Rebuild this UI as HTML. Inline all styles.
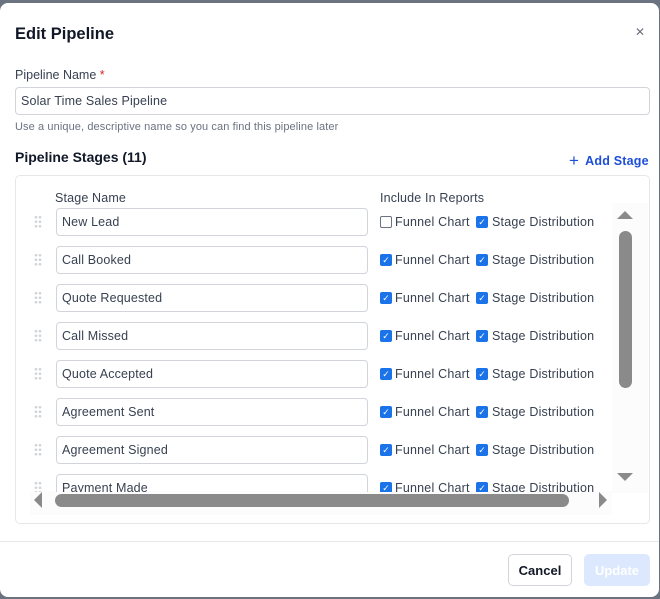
<!DOCTYPE html>
<html><head><style>
*{box-sizing:border-box;margin:0;padding:0}
body{width:660px;height:599px;background:#6b7280;font-family:"Liberation Sans",sans-serif;position:relative;overflow:hidden;color:#374151}
.m{position:absolute;left:0;top:3px;width:659px;height:594px;background:#fff;border-radius:8px}
.a{position:absolute}
.t{left:15px;top:22px;font-size:16.5px;font-weight:bold;color:#111827}
.x{left:635px;top:22px;font-size:12px;color:#6b7280}
.lbl{left:15px;top:65px;font-size:12.5px;color:#374151}
.inp{border:1px solid #d1d5db;border-radius:4px;font-size:12.5px;color:#374151;padding-left:5px;display:flex;align-items:center;letter-spacing:.15px}
.help{left:15px;top:118px;font-size:11px;color:#6b7280;letter-spacing:.1px}
.h2{left:15px;top:146px;font-size:14px;font-weight:bold;color:#111827}
.add{left:569px;top:147px;font-size:12.5px;font-weight:bold;color:#1d4ed8;letter-spacing:.2px}
.box{left:15px;top:172px;width:635px;height:349px;border:1px solid #e5e7eb;border-radius:5px}
.clip{left:16px;top:173px;width:596px;height:316px;overflow:hidden}
.row{position:absolute;left:0;width:596px;height:28px}
.dr{position:absolute;left:18px;top:7px;width:8px;height:14px;background:radial-gradient(circle,#d1d5db 1.2px,transparent 1.5px) 0 0/4px 4.5px}
.cb{position:absolute;width:12px;height:12px;border-radius:2px;background:#1a73e8;color:#fff;font-size:9px;line-height:12px;text-align:center}
.cb.off{background:#fff;border:1px solid #6b7280}
.ct{position:absolute;font-size:12.5px;color:#374151;top:7px;letter-spacing:.2px}
.btn{border-radius:5px;font-size:13px;font-weight:bold;display:flex;align-items:center;justify-content:center}
</style></head><body>
<div class="m">
<div class="a t">Edit Pipeline</div>
<div class="a x">✕</div>
<div class="a lbl">Pipeline Name <span style="color:#dc2626">*</span></div>
<div class="a inp" style="left:15px;top:84px;width:635px;height:28px">Solar Time Sales Pipeline</div>
<div class="a help">Use a unique, descriptive name so you can find this pipeline later</div>
<div class="a h2">Pipeline Stages (11)</div>
<div class="a add"><span style="font-size:17px;font-weight:normal;position:relative;top:1px;margin-right:6px">+</span>Add Stage</div>
<div class="a box"></div>
<div class="a" style="left:612px;top:200px;width:36px;height:290px;background:#fcfcfc"></div>
<div class="a" style="left:30px;top:488px;width:582px;height:24px;background:#fcfcfc"></div>
<div class="a clip">
<div class="a" style="left:39px;top:15px;font-size:12.5px;letter-spacing:.15px">Stage Name</div>
<div class="a" style="left:364px;top:15px;font-size:12.5px;letter-spacing:.15px">Include In Reports</div>
<div id="rows"></div>
</div>
<div class="a" style="left:617px;top:208px;width:0;height:0;border-left:8px solid transparent;border-right:8px solid transparent;border-bottom:8px solid #8a8a8a"></div>
<div class="a" style="left:619px;top:228px;width:13px;height:157px;border-radius:7px;background:#8a8a8a"></div>
<div class="a" style="left:617px;top:470px;width:0;height:0;border-left:8px solid transparent;border-right:8px solid transparent;border-top:8px solid #8a8a8a"></div>
<div class="a" style="left:34px;top:489px;width:0;height:0;border-top:8px solid transparent;border-bottom:8px solid transparent;border-right:8px solid #8a8a8a"></div>
<div class="a" style="left:55px;top:491px;width:514px;height:13px;border-radius:7px;background:#8a8a8a"></div>
<div class="a" style="left:599px;top:489px;width:0;height:0;border-top:8px solid transparent;border-bottom:8px solid transparent;border-left:8px solid #8a8a8a"></div>
<div class="a" style="left:0;top:538px;width:659px;height:1px;background:#e5e7eb"></div>
<div class="a btn" style="left:508px;top:551px;width:64px;height:32px;border:1px solid #d1d5db;color:#111827">Cancel</div>
<div class="a btn" style="left:584px;top:551px;width:66px;height:32px;background:#dbe8fd;color:#fff">Update</div>
</div>
<script>
var n=["New Lead","Call Booked","Quote Requested","Call Missed","Quote Accepted","Agreement Sent","Agreement Signed","Payment Made"],h="";
n.forEach(function(s,i){var y=32+i*38;h+='<div class="row" style="top:'+y+'px"><div class="dr"></div><div class="a inp" style="left:40px;top:0;width:312px;height:28px">'+s+'</div><div class="cb'+(i==0?' off':'')+'" style="left:364px;top:8px">'+(i==0?'':'✓')+'</div><div class="ct" style="left:379px">Funnel Chart</div><div class="cb" style="left:460px;top:8px">✓</div><div class="ct" style="left:476px">Stage Distribution</div></div>'});
document.getElementById("rows").innerHTML=h;
</script>
</body></html>
